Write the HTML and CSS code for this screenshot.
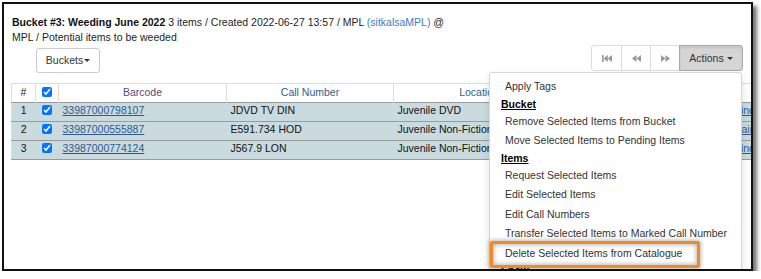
FILE: index.html
```html
<!DOCTYPE html>
<html lang="en">
<head>
    <meta charset="UTF-8">
    <title>Item Bucket</title>
    <link rel="stylesheet" href="styles.css">
</head>
<body>
    <div class="frame">
        <div class="page">
            <div class="bucket-title">
                <strong>Bucket #3: Weeding June 2022</strong> 3 items / Created 2022-06-27 13:57 / MPL <a href="#" class="owner">(sitkalsaMPL)</a> @<br>
                MPL / Potential items to be weeded
            </div>

            <div class="toolbar">
                <button class="btn buckets">Buckets<span class="caret"></span></button>

                <div class="actions-wrap">
                    <div class="btn-group">
                        <button class="btn pager first">
                            <svg width="10" height="7" viewBox="0 0 10 7"><rect x="0" y="0" width="1.6" height="7"/><polygon points="5.8,0 1.6,3.5 5.8,7"/><polygon points="10,0 5.8,3.5 10,7"/></svg>
                        </button>
                        <button class="btn pager">
                            <svg width="9" height="7" viewBox="0 0 9 7"><polygon points="4.5,0 0,3.5 4.5,7"/><polygon points="9,0 4.5,3.5 9,7"/></svg>
                        </button>
                        <button class="btn pager">
                            <svg width="9" height="7" viewBox="0 0 9 7"><polygon points="0,0 4.5,3.5 0,7"/><polygon points="4.5,0 9,3.5 4.5,7"/></svg>
                        </button>
                        <button class="btn actions">Actions <span class="caret"></span></button>
                    </div>

                    <ul class="dropdown-menu">
                        <li class="item">Apply Tags</li>
                        <li class="header">Bucket</li>
                        <li class="item">Remove Selected Items from Bucket</li>
                        <li class="item">Move Selected Items to Pending Items</li>
                        <li class="header">Items</li>
                        <li class="item">Request Selected Items</li>
                        <li class="item">Edit Selected Items</li>
                        <li class="item">Edit Call Numbers</li>
                        <li class="item">Transfer Selected Items to Marked Call Number</li>
                        <li class="item marked">Delete Selected Items from Catalogue<span class="highlight"></span></li>
                        <li class="header">Show</li>
                    </ul>
                </div>
            </div>

            <table class="items">
                <colgroup>
                    <col class="c-num">
                    <col class="c-check">
                    <col class="c-barcode">
                    <col class="c-call">
                    <col class="c-loc">
                    <col class="c-title">
                    <col class="c-author">
                </colgroup>
                <thead>
                    <tr>
                        <th>#</th>
                        <th><input type="checkbox" checked></th>
                        <th><a href="#" class="sort visited">Barcode</a></th>
                        <th><a href="#" class="sort">Call Number</a></th>
                        <th><a href="#" class="sort">Location</a></th>
                        <th></th>
                        <th></th>
                    </tr>
                </thead>
                <tbody>
                    <tr>
                        <td class="num">1</td>
                        <td class="check"><input type="checkbox" checked></td>
                        <td><a href="#">33987000798107</a></td>
                        <td>JDVD TV DIN</td>
                        <td>Juvenile DVD</td>
                        <td></td>
                        <td><a href="#">Finding</a></td>
                    </tr>
                    <tr>
                        <td class="num">2</td>
                        <td class="check"><input type="checkbox" checked></td>
                        <td><a href="#">33987000555887</a></td>
                        <td>E591.734 HOD</td>
                        <td>Juvenile Non-Fiction</td>
                        <td></td>
                        <td><a href="#">Painting</a></td>
                    </tr>
                    <tr>
                        <td class="num">3</td>
                        <td class="check"><input type="checkbox" checked></td>
                        <td><a href="#">33987000774124</a></td>
                        <td>J567.9 LON</td>
                        <td>Juvenile Non-Fiction</td>
                        <td></td>
                        <td><a href="#">Finding</a></td>
                    </tr>
                </tbody>
            </table>
        </div>
    </div>
</body>
</html>
```

FILE: styles.css
```css
* {
    margin: 0;
    padding: 0;
    box-sizing: border-box;
}

body {
    background: #fff;
    font-family: "Liberation Sans", Arial, sans-serif;
    font-size: 10.5px;
    line-height: 15px;
    color: #1e1e1e;
}

a {
    color: #2d5f96;
}

.frame {
    width: 751px;
    height: 269px;
    margin: 2px 0 0 2px;
    border: 2px solid #111;
    background: #fff;
    box-shadow: 4px 4px 4px rgba(0, 0, 0, 0.55);
    overflow: hidden;
}

.page {
    padding: 11px 8px 0 7px;
}

.bucket-title {
    padding-left: 1px;
}
.bucket-title strong {
    color: #111;
}
.bucket-title .owner {
    color: #3a7cc8;
    text-decoration: none;
}

.toolbar {
    display: flex;
    justify-content: space-between;
    align-items: flex-start;
}

.btn {
    display: flex;
    align-items: center;
    justify-content: center;
    height: 26px;
    font: inherit;
    color: #333;
    background: #fff;
    border: 1px solid #ccc;
    border-radius: 3px;
}

.caret {
    display: inline-block;
    width: 0;
    height: 0;
    margin-left: 1px;
    border-top: 3px solid #333;
    border-left: 3px solid transparent;
    border-right: 3px solid transparent;
}

.buckets {
    width: 64px;
    height: 25px;
    margin: 3px 0 0 25px;
}

.actions-wrap {
    position: relative;
}

.btn-group {
    display: flex;
}
.btn-group .btn {
    border-radius: 0;
    margin-left: -1px;
}
.btn-group .first {
    margin-left: 0;
    border-radius: 3px 0 0 3px;
}
.pager {
    width: 30px;
    border-color: #ddd;
    fill: #999;
}
.pager.first {
    width: 31px;
}
.actions {
    width: 64px;
    background: #d5d5d5;
    border-color: #a9a9a9;
    border-radius: 0 3px 3px 0 !important;
    box-shadow: inset 0 2px 3px rgba(0, 0, 0, 0.08);
}
.actions .caret {
    margin-left: 3px;
}

.dropdown-menu {
    position: absolute;
    top: calc(100% + 1px);
    right: 1px;
    width: 253px;
    padding-top: 4px;
    list-style: none;
    background: #fff;
    border: 1px solid #d6d6d6;
    border-radius: 3px;
    box-shadow: 0 4px 9px rgba(0, 0, 0, 0.12);
    z-index: 2;
}
.dropdown-menu .item {
    padding-left: 15px;
    line-height: 19.5px;
    color: #333;
    white-space: nowrap;
}
.dropdown-menu .header {
    padding-left: 11px;
    line-height: 15px;
    font-weight: bold;
    color: #000;
    text-decoration: underline;
}
.dropdown-menu .marked {
    position: relative;
}
.highlight {
    position: absolute;
    left: 0;
    top: -3px;
    width: 210px;
    height: 27px;
    border: 3px solid #f5891f;
    border-radius: 2px;
    box-shadow: 0 0 4px 1px rgba(0, 0, 0, 0.28), inset 0 0 4px 1px rgba(0, 0, 0, 0.28);
}

.items {
    width: 890px;
    margin-top: 10px;
    table-layout: fixed;
    border-collapse: collapse;
    border-left: 1px solid #ddd;
}
.c-num { width: 24px; }
.c-check { width: 23px; }
.c-barcode { width: 168px; }
.c-call { width: 167px; }
.c-loc { width: 171px; }
.c-title { width: 166px; }
.c-author { width: 171px; }

.items th {
    height: 19px;
    padding: 1px 4px 2px;
    font-weight: normal;
    text-align: center;
    border-top: 1px solid #ddd;
    border-right: 1px solid #ddd;
    background: #fff;
    color: #222;
}
.items th .sort {
    color: #2d5f91;
    text-decoration: none;
}
.items th .visited {
    color: #5a4a78;
}

.items td {
    height: 19px;
    padding: 0 4px 3px;
    background: #c9dbdf;
    border-top: 1px solid #9b9b9b;
    white-space: nowrap;
    overflow: hidden;
    color: #111;
}
.items tbody tr:last-child td {
    border-bottom: 1px solid #9b9b9b;
}
.items td a {
    color: #2d5a92;
}
.items .num,
.items .check {
    text-align: center;
}

input[type="checkbox"] {
    width: 10px;
    height: 10px;
    vertical-align: middle;
    margin-top: -2px;
}
```
